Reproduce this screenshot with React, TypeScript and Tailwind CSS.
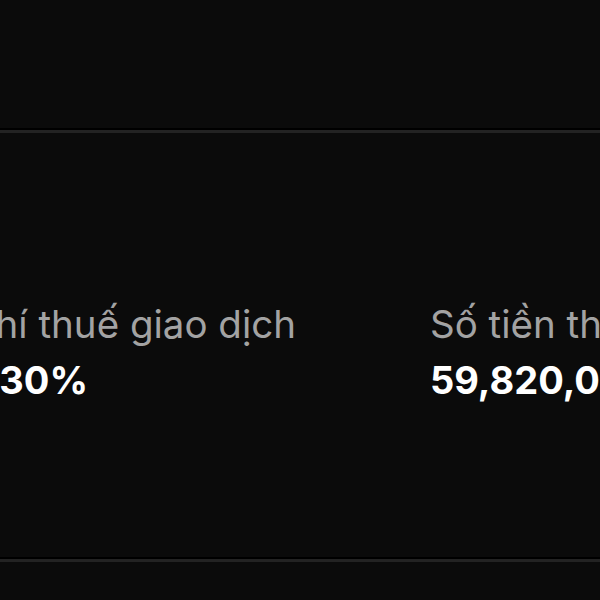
const stats = [
  { label: 'Phí thuế giao dịch', value: '0.30%', shift: 'ml-[-8px]' },
  { label: 'Số tiền thực nhận', value: '59,820,000 VND', shift: '' },
];

export default function App() {
  return (
    <div
      className="w-[600px] h-[600px] overflow-hidden bg-[#0b0b0b] flex flex-col"
      style={{ fontFamily: 'Inter, "Noto Sans", sans-serif' }}
    >
      <div className="h-[128px] shrink-0" />
      <div className="h-[2px] bg-black shrink-0" />
      <div className="h-[3px] bg-[#232323] shrink-0" />
      <div className="h-[424px] shrink-0 pt-[172px]">
        <div className="flex ml-[-29px] whitespace-nowrap">
          {stats.map((s) => (
            <div key={s.label} className="w-[459px] shrink-0 flex flex-col gap-[18px]">
              <span className="text-[38.5px] leading-[38px] text-[#a3a3a3]">{s.label}</span>
              <span className={`text-[38px] leading-[39px] font-bold text-white ${s.shift}`}>
                {s.value}
              </span>
            </div>
          ))}
        </div>
      </div>
      <div className="h-[2px] bg-black shrink-0" />
      <div className="h-[3px] bg-[#232323] shrink-0" />
      <div className="flex-1" />
    </div>
  );
}
